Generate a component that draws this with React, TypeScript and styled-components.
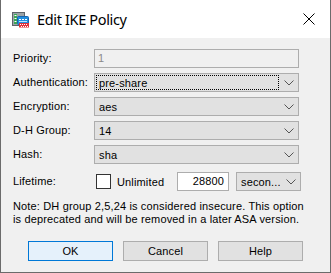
import React from "react";
import styled, { createGlobalStyle, css } from "styled-components";

const GlobalStyle = createGlobalStyle`
  html, body { margin: 0; padding: 0; background: #ffffff; }
  * { box-sizing: border-box; }
`;

const uiFont = `"Liberation Sans", Arial, sans-serif`;

const Window = styled.div`
  width: 331px;
  height: 273px;
  display: flex;
  flex-direction: column;
  border-left: 1px solid #6b6b6b;
  border-right: 1px solid #6b6b6b;
  border-bottom: 1px solid #6b6b6b;
  background: #f0f0f0;
  font-family: ${uiFont};
  font-size: 11px;
  letter-spacing: 0.15px;
  color: #000;
`;

const TitleBar = styled.div`
  height: 38px;
  background: #ffffff;
  display: flex;
  align-items: center;
  padding-left: 11px;
  padding-right: 15px;
  letter-spacing: 0;
`;

const Title = styled.div`
  margin-left: 8px;
  flex: 1;
  font-family: "Noto Sans", ${uiFont};
  font-size: 14.5px;
  letter-spacing: -0.35px;
  color: #000;
`;

const CloseBtn = styled.div`
  width: 12px;
  height: 12px;
  display: flex;
`;

const Body = styled.div`
  flex: 1;
  padding: 11px 0 0 12px;
  display: flex;
  flex-direction: column;
`;

const Form = styled.div`
  display: grid;
  grid-template-columns: 81px 205px;
  grid-auto-rows: 19px;
  row-gap: 5px;
  align-items: center;
`;

const Label = styled.div`
  line-height: 19px;
  white-space: nowrap;
`;

const boxBase = css`
  height: 19px;
  border: 1px solid #adadad;
  display: flex;
  align-items: center;
  line-height: 17px;
  font-size: 11px;
`;

const TextBox = styled.div<{ $disabled?: boolean }>`
  ${boxBase};
  padding-left: 3px;
  background: ${(p) => (p.$disabled ? "#f0f0f0" : "#ffffff")};
  color: ${(p) => (p.$disabled ? "#8a8a8a" : "#000")};
`;

const Select = styled.div`
  ${boxBase};
  background: #e1e1e1;
  padding: 1px 0 1px 1px;
`;

const SelectValue = styled.div<{ $focus?: boolean }>`
  flex: 1;
  height: 15px;
  line-height: 14px;
  padding-left: 2px;
  border: 1px dotted ${(p) => (p.$focus ? "#000" : "transparent")};
  white-space: nowrap;
  overflow: hidden;
`;

const Chevron = styled.div`
  width: 19px;
  display: flex;
  justify-content: center;
  align-items: center;
`;

const LifetimeRow = styled.div`
  display: grid;
  grid-template-columns: 81px 83px 52px 7px 65px;
  height: 19px;
  margin-top: 8px;
  align-items: center;
`;

const CheckWrap = styled.label`
  display: flex;
  align-items: center;
  padding-left: 2px;
  gap: 6px;
`;

const CheckBox = styled.span`
  width: 15px;
  height: 15px;
  border: 1px solid #333333;
  background: #ffffff;
`;

const NumberBox = styled(TextBox)`
  justify-content: flex-end;
  padding-right: 4px;
  padding-left: 0;
`;

const Note = styled.div`
  margin-top: 9px;
  line-height: 13px;
  width: 306px;
  white-space: nowrap;
`;

const ButtonRow = styled.div`
  display: flex;
  gap: 10px;
  margin-top: 15px;
  padding-left: 15px;
`;

const Button = styled.div<{ $default?: boolean }>`
  width: 85px;
  height: 20px;
  display: flex;
  align-items: center;
  justify-content: center;
  border: 1px solid ${(p) => (p.$default ? "#0078d7" : "#adadad")};
  background: ${(p) => (p.$default ? "#e5f1fb" : "#e1e1e1")};
  font-size: 11px;
`;

const ChevronIcon = () => (
  <svg width="10" height="6" viewBox="0 0 10 6">
    <path d="M0.5 0.5 L5 5 L9.5 0.5" fill="none" stroke="#555" strokeWidth="1" />
  </svg>
);

const AppIcon = () => (
  <svg width="17" height="17" viewBox="0 0 17 17">
    <rect x="0.5" y="1.5" width="12" height="13" fill="#9aa3a8" stroke="#5c6469" />
    <rect x="2" y="3" width="3" height="10" fill="#3aa655" />
    <rect x="2.5" y="4" width="2" height="1" fill="#fff" />
    <rect x="2.5" y="7" width="2" height="1" fill="#fff" />
    <rect x="2.5" y="10" width="2" height="1" fill="#fff" />
    <rect x="5.5" y="5.5" width="11" height="8" rx="1" fill="#1f8fe0" stroke="#1565b0" />
    <rect x="7" y="8" width="2" height="1" fill="#fff" />
    <rect x="10" y="8" width="2" height="1" fill="#fff" />
    <rect x="13" y="8" width="2" height="1" fill="#fff" />
    <rect x="7" y="10" width="8" height="1" fill="#bfe3ff" />
    <rect x="7" y="12" width="10" height="4.5" fill="#e0303a" />
    <rect x="8" y="13" width="1" height="1" fill="#fff" />
    <rect x="10" y="13" width="1" height="1" fill="#fff" />
    <rect x="12" y="13" width="1" height="1" fill="#fff" />
    <rect x="14" y="13" width="1" height="1" fill="#fff" />
    <rect x="9" y="15" width="1" height="1" fill="#fff" />
    <rect x="11" y="15" width="1" height="1" fill="#fff" />
    <rect x="13" y="15" width="1" height="1" fill="#fff" />
    <rect x="15" y="15" width="1" height="1" fill="#fff" />
  </svg>
);

const CloseIcon = () => (
  <svg width="12" height="12" viewBox="0 0 12 12">
    <path d="M0.5 0.5 L11.5 11.5 M11.5 0.5 L0.5 11.5" stroke="#000" strokeWidth="1" />
  </svg>
);

const selectRows: { label: string; value: string; focus?: boolean }[] = [
  { label: "Authentication:", value: "pre-share", focus: true },
  { label: "Encryption:", value: "aes" },
  { label: "D-H Group:", value: "14" },
  { label: "Hash:", value: "sha" },
];

export default function App() {
  return (
    <>
      <GlobalStyle />
      <Window>
        <TitleBar>
          <AppIcon />
          <Title>Edit IKE Policy</Title>
          <CloseBtn>
            <CloseIcon />
          </CloseBtn>
        </TitleBar>
        <Body>
          <Form>
            <Label>Priority:</Label>
            <TextBox $disabled>1</TextBox>
            {selectRows.map((r) => (
              <React.Fragment key={r.label}>
                <Label>{r.label}</Label>
                <Select>
                  <SelectValue $focus={r.focus}>{r.value}</SelectValue>
                  <Chevron>
                    <ChevronIcon />
                  </Chevron>
                </Select>
              </React.Fragment>
            ))}
          </Form>
          <LifetimeRow>
            <Label>Lifetime:</Label>
            <CheckWrap>
              <CheckBox />
              Unlimited
            </CheckWrap>
            <NumberBox>28800</NumberBox>
            <span />
            <Select>
              <SelectValue>secon...</SelectValue>
              <Chevron>
                <ChevronIcon />
              </Chevron>
            </Select>
          </LifetimeRow>
          <Note>
            Note: DH group 2,5,24 is considered insecure. This option
            <br />
            is deprecated and will be removed in a later ASA version.
          </Note>
          <ButtonRow>
            <Button $default>OK</Button>
            <Button>Cancel</Button>
            <Button>Help</Button>
          </ButtonRow>
        </Body>
      </Window>
    </>
  );
}
